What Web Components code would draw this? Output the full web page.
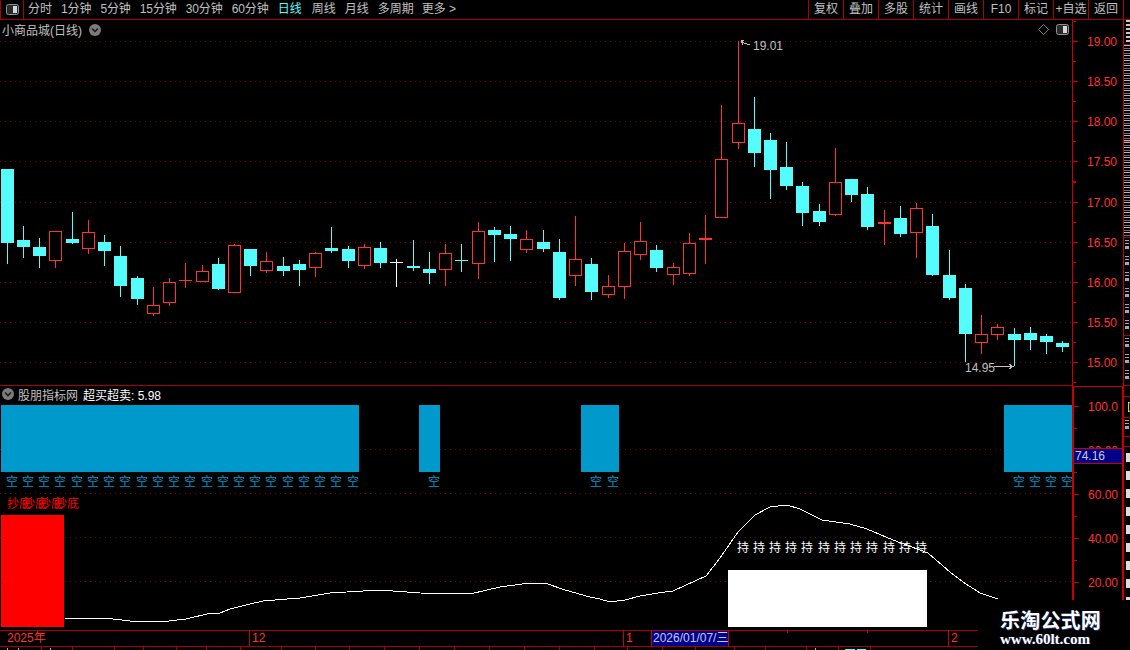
<!DOCTYPE html>
<html lang="zh">
<head>
<meta charset="utf-8">
<title>小商品城(日线)</title>
<style>
  html, body { margin: 0; background: #000; overflow: hidden; }
</style>
</head>
<body>
<terminal-shell>
  <tool-bar slot="toolbar">
    <tool-tab slot="tabs">分时</tool-tab>
    <tool-tab slot="tabs" tight>1分钟</tool-tab>
    <tool-tab slot="tabs" tight>5分钟</tool-tab>
    <tool-tab slot="tabs" tight>15分钟</tool-tab>
    <tool-tab slot="tabs" tight>30分钟</tool-tab>
    <tool-tab slot="tabs" tight>60分钟</tool-tab>
    <tool-tab slot="tabs" active>日线</tool-tab>
    <tool-tab slot="tabs" style="margin-left:1px">周线</tool-tab>
    <tool-tab slot="tabs">月线</tool-tab>
    <tool-tab slot="tabs">多周期</tool-tab>
    <tool-tab slot="tabs" style="margin-left:-1px">更多 &gt;</tool-tab>
    <tool-button slot="buttons">复权</tool-button>
    <tool-button slot="buttons">叠加</tool-button>
    <tool-button slot="buttons">多股</tool-button>
    <tool-button slot="buttons">统计</tool-button>
    <tool-button slot="buttons">画线</tool-button>
    <tool-button slot="buttons">F10</tool-button>
    <tool-button slot="buttons">标记</tool-button>
    <tool-button slot="buttons">+自选</tool-button>
    <tool-button slot="buttons">返回</tool-button>
  </tool-bar>

  <kline-panel slot="price">
    <span>小商品城(日线)</span>
    <chev-icon></chev-icon>
  </kline-panel>
  <value-axis slot="price-axis" top="20" height="365"
    ticks="41:19.00,81:18.50,121:18.00,161:17.50,202:17.00,242:16.50,282:16.00,322:15.50,362:15.00"></value-axis>

  <indicator-panel slot="indicator">
    <chev-icon></chev-icon>
    <span class="name">股朋指标网</span>
    <span class="value">超买超卖: 5.98</span>
  </indicator-panel>
  <value-axis slot="indicator-axis" heavy top="386" height="244" marker="74.16" marker-y="447"
    ticks="405:100.0,449:80.00,493:60.00,537:40.00,581:20.00"></value-axis>

  <date-bar slot="dates">
    <date-seg style="width:249px;padding-left:7px">2025年</date-seg>
    <date-seg style="width:374px" mark>12</date-seg>
    <date-seg style="width:28px" mark>1</date-seg>
    <date-seg style="width:78px" current>2026/01/07/三</date-seg>
    <date-seg style="width:219px" ruler></date-seg>
    <date-seg style="width:124px" mark>2</date-seg>
  </date-bar>
  <tab-strip slot="tabs" stops="42,73,115,144,177,207,241,282,316,350,385,420,455,490,525,560,595,628,663,696,735,766,807,839,871"></tab-strip>

  <side-strip slot="side"></side-strip>
  <water-mark slot="overlay"></water-mark>
</terminal-shell>

<script>
// candle data in page pixels: [x, high, bodyTop, bodyBottom, low, kind]
// kind: c = falling (solid cyan), r = rising (hollow red), w = flat white
const CANDLES = [
  [7,169,169,243,264,'c'],[23,226,240,247,258,'c'],[39,238,247,256,268,'c'],[55,231,231,261,268,'r'],
  [72,212,239,243,244,'c'],[88,220,232,249,254,'r'],[104,235,242,251,266,'c'],[120,246,256,286,297,'c'],
  [137,276,278,299,305,'c'],[153,287,305,314,316,'r'],[169,278,282,303,306,'r'],[185,263,280,280,288,'r'],
  [202,265,271,282,282,'r'],[218,258,264,289,290,'c'],[234,244,245,293,293,'r'],[250,249,249,266,276,'c'],
  [266,252,261,271,273,'r'],[283,257,266,271,276,'c'],[299,260,264,270,286,'c'],[315,252,253,268,277,'r'],
  [331,227,248,251,253,'c'],[348,246,249,261,268,'c'],[364,244,247,266,269,'r'],[380,242,248,263,268,'c'],
  [396,259,262,262,287,'w'],[413,240,266,268,271,'c'],[429,252,269,273,284,'c'],[445,244,253,270,286,'r'],
  [461,244,260,260,272,'c'],[478,222,231,264,279,'r'],[494,227,230,235,262,'c'],[510,226,234,239,261,'c'],
  [526,230,239,250,253,'r'],[543,230,242,249,252,'c'],[559,239,252,298,300,'c'],[575,216,259,276,286,'r'],
  [591,258,264,292,300,'c'],[608,275,286,295,298,'r'],[624,243,251,287,299,'r'],[640,222,241,255,260,'r'],
  [656,245,250,268,272,'c'],[673,263,267,275,285,'r'],[689,233,243,274,276,'r'],[705,215,238,240,264,'r'],
  [721,105,159,218,218,'r'],[738,41,123,143,149,'r'],[754,97,129,153,167,'c'],[770,133,140,170,199,'c'],
  [786,142,167,186,190,'c'],[802,182,186,213,226,'c'],[819,204,211,222,226,'c'],[835,148,182,215,216,'r'],
  [851,179,179,195,202,'c'],[867,187,194,227,230,'c'],[884,210,222,223,245,'r'],[900,206,218,234,237,'c'],
  [916,203,208,233,258,'r'],[932,214,226,275,276,'c'],[949,250,275,298,300,'c'],[965,284,288,334,362,'c'],
  [981,315,334,343,354,'r'],[997,324,327,335,340,'r'],[1014,328,334,340,366,'c'],[1030,327,333,340,350,'c'],
  [1046,334,336,342,354,'c'],[1062,341,343,347,352,'c']
];

const CURVE = '64,618 113,619 130,621 146,621 160,622 186,619 207,614 220,613 230,609 250,604 263,601 275,600 300,598 330,593 380,590 420,593 470,594 500,587 530,583 545,583 565,590 590,597 600,599 610,602 625,600 640,596 658,593 673,591 706,576 720,558 738,532 755,515 770,507 787,505 800,509 822,520 850,524 867,529 893,540 928,553 950,572 963,582 980,593 998,599';

const COLORS = { c: '#54fcfc', r: '#ff3232', w: '#ffffff' };
const RED_LINE = '#aa0000';
const AXIS_LINE = '#c80000';
const GRID_DOT = '#8c0000';

function dotted(y) {
  return `<line x1="0" x2="1072" y1="${y + 0.5}" y2="${y + 0.5}" stroke="${GRID_DOT}" stroke-dasharray="1 4"/>`;
}

function candleSvg([x, high, top, bottom, low, kind]) {
  const color = COLORS[kind];
  const wick = `<rect x="${x}" y="${high}" width="1" height="${low - high}" fill="${color}"/>`;
  // flat or one-step bodies are just a bar across the wick
  if (bottom - top < 2) return wick + `<rect x="${x - 6}" y="${top}" width="13" height="${bottom - top + 1}" fill="${color}"/>`;
  if (kind === 'c') return wick + `<rect x="${x - 6}" y="${top}" width="13" height="${bottom - top}" fill="${color}"/>`;
  return wick + `<rect x="${x - 5.5}" y="${top + 0.5}" width="12" height="${bottom - top - 1}" fill="#000" stroke="${color}"/>`;
}

class TerminalShell extends HTMLElement {
  constructor() {
    super();
    this.attachShadow({ mode: 'open' });
    this.shadowRoot.innerHTML = `
      <style>
        :host {
          display: grid;
          position: relative;
          width: 1130px;
          height: 650px;
          overflow: hidden;
          background: #000;
          color: #c0c0c0;
          font: 12px "Liberation Sans", "Noto Sans CJK SC", sans-serif;
          grid-template-columns: 1072px 52px 6px;
          grid-template-rows: 20px 366px 244px 17px 3px;
        }
        .full { grid-column: 1 / -1; }
        .side { grid-column: 3; grid-row: 2 / 6; }
        .low { grid-column: 1; }
      </style>
      <div class="full" style="display:grid"><slot name="toolbar"></slot></div>
      <div style="display:grid"><slot name="price"></slot></div>
      <div style="display:grid"><slot name="price-axis"></slot></div>
      <div class="side" style="display:grid"><slot name="side"></slot></div>
      <div style="display:grid"><slot name="indicator"></slot></div>
      <div style="display:grid"><slot name="indicator-axis"></slot></div>
      <div class="low" style="display:grid"><slot name="dates"></slot></div>
      <div class="low" style="display:grid;grid-row:5"><slot name="tabs"></slot></div>
      <slot name="overlay"></slot>
    `;
  }
}

class ToolBar extends HTMLElement {
  constructor() {
    super();
    this.attachShadow({ mode: 'open' });
    this.shadowRoot.innerHTML = `
      <style>
        :host {
          display: flex;
          height: 20px;
          box-sizing: border-box;
          border-bottom: 1px solid ${RED_LINE};
          padding-right: 6px;
        }
        .menu {
          width: 24px;
          box-sizing: border-box;
          border-left: 1px solid ${RED_LINE};
          border-right: 1px solid ${RED_LINE};
          display: flex;
          align-items: center;
          justify-content: center;
        }
        .tabs { display: flex; gap: 9px; padding-left: 4px; flex: 1; }
        .buttons { display: flex; border-right: 1px solid ${RED_LINE}; }
      </style>
      <div class="menu"><pane-icon></pane-icon></div>
      <div class="tabs"><slot name="tabs"></slot></div>
      <div class="buttons"><slot name="buttons"></slot></div>
    `;
  }
}

class ToolTab extends HTMLElement {
  constructor() {
    super();
    this.attachShadow({ mode: 'open' });
    this.shadowRoot.innerHTML = `
      <style>
        :host { display: block; line-height: 19px; white-space: nowrap; }
        :host([active]) { color: #54fcfc; }
        :host([tight]) { letter-spacing: -.1px; }
      </style>
      <slot></slot>
    `;
  }
}

class ToolButton extends HTMLElement {
  constructor() {
    super();
    this.attachShadow({ mode: 'open' });
    this.shadowRoot.innerHTML = `
      <style>
        :host {
          display: block;
          width: 35px;
          box-sizing: border-box;
          border-left: 1px solid ${RED_LINE};
          line-height: 19px;
          text-align: center;
          white-space: nowrap;
        }
      </style>
      <slot></slot>
    `;
  }
}

class PaneIcon extends HTMLElement {
  constructor() {
    super();
    this.attachShadow({ mode: 'open' });
    this.shadowRoot.innerHTML = `
      <style>:host { display: block; width: 13px; height: 11px; } svg { display: block; }</style>
      <svg width="13" height="11" viewBox="0 0 13 11">
        <rect x=".5" y=".5" width="12" height="10" rx="2" fill="#2a2a2a" stroke="#909090"/>
        <rect x="7" y="2" width="4" height="7" fill="#d8d8d8"/>
      </svg>
    `;
  }
}

class ChevIcon extends HTMLElement {
  constructor() {
    super();
    this.attachShadow({ mode: 'open' });
    this.shadowRoot.innerHTML = `
      <style>:host { display: block; width: 12px; height: 12px; } svg { display: block; }</style>
      <svg width="12" height="12" viewBox="0 0 12 12">
        <circle cx="6" cy="6" r="6" fill="#7c7c7c"/>
        <path d="M3 4.5 6 7.5 9 4.5" fill="none" stroke="#1c1c1c" stroke-width="1.6"/>
      </svg>
    `;
  }
}

class KlinePanel extends HTMLElement {
  constructor() {
    super();
    this.attachShadow({ mode: 'open' });
    const ys = [41, 81, 121, 161, 202, 242, 282, 322, 362];
    this.shadowRoot.innerHTML = `
      <style>
        :host {
          display: grid;
          height: 366px;
          box-sizing: border-box;
          border-bottom: 1px solid ${RED_LINE};
          overflow: hidden;
        }
        svg, .head { grid-area: 1 / 1; }
        svg { display: block; }
        .head {
          display: flex;
          align-items: center;
          align-self: start;
          height: 19px;
          padding: 0 3px 0 2px;
          gap: 7px;
          color: #c0c0c0;
        }
        .right { margin-left: auto; display: flex; align-items: center; gap: 7px; }
        text { fill: #c0c0c0; font-size: 12px; }
      </style>
      <svg width="1072" height="365" viewBox="0 20 1072 365" shape-rendering="crispEdges">
        ${ys.map(dotted).join('')}
        ${CANDLES.map(candleSvg).join('')}
        <path d="M741 41 744 43 750 45M741 41 744 40M741 41 743 45" fill="none" stroke="#c0c0c0"/>
        <text x="753" y="50">19.01</text>
        <text x="965" y="372">14.95</text>
        <path d="M994 366.5H1013M1009 364 1013 366.5 1009 369" fill="none" stroke="#c0c0c0"/>
      </svg>
      <div class="head">
        <slot></slot>
        <div class="right">
          <svg width="11" height="11" viewBox="0 0 11 11" shape-rendering="auto"><path d="M5.5 .5 10.5 5.5 5.5 10.5 .5 5.5Z" fill="none" stroke="#808080"/></svg>
          <pane-icon></pane-icon>
        </div>
      </div>
    `;
  }
}

class IndicatorPanel extends HTMLElement {
  constructor() {
    super();
    this.attachShadow({ mode: 'open' });
    const bars = [[1, 358], [419, 21], [581, 38], [1004, 68]]
      .map(([x, w]) => `<rect x="${x}" y="405" width="${w}" height="67" fill="#0099cc"/>`).join('');
    // signal labels sit 5px to the right of the candle they belong to
    const kong = CANDLES.filter((c, i) => i < 22 || [26, 36, 37, 62, 63, 64, 65].includes(i))
      .map(c => `<text class="kong" x="${c[0] + 5}" y="486">空</text>`).join('');
    const chi = CANDLES.slice(45, 57)
      .map(c => `<text class="chi" x="${c[0] + 5}" y="552">持</text>`).join('');
    const bottom = [7, 23, 39, 55]
      .map(x => `<text class="bottom" x="${x}" y="508">抄底</text>`).join('');
    this.shadowRoot.innerHTML = `
      <style>
        :host { display: grid; height: 244px; overflow: hidden; }
        svg, .head { grid-area: 1 / 1; }
        svg { display: block; }
        .head {
          display: flex;
          align-items: center;
          align-self: start;
          height: 16px;
          padding-left: 2px;
          gap: 4px;
        }
        text { font-size: 12px; text-anchor: middle; }
        .kong { fill: #0099cc; }
        .chi { fill: #fff; }
        .bottom { fill: #ff0000; text-anchor: start; }
        ::slotted(.name) { margin-right: 1px; }
        ::slotted(.value) { color: #fff; }
      </style>
      <svg width="1072" height="244" viewBox="0 386 1072 244" shape-rendering="crispEdges">
        ${[449, 493, 537, 581].map(dotted).join('')}
        ${bars}
        ${kong}
        ${bottom}
        <rect x="1" y="515" width="63" height="112" fill="#ff0000"/>
        <polyline points="${CURVE}" fill="none" stroke="#fff"/>
        ${chi}
        <rect x="728" y="570" width="199" height="57" fill="#fff"/>
      </svg>
      <div class="head"><slot></slot></div>
    `;
  }
}

class ValueAxis extends HTMLElement {
  connectedCallback() {
    const top = Number(this.getAttribute('top'));
    const height = Number(this.getAttribute('height'));
    const ticks = this.getAttribute('ticks').split(',').map(t => t.split(':'));
    const step = (Number(ticks[ticks.length - 1][0]) - Number(ticks[0][0])) / (ticks.length - 1);
    const marks = ticks.map(([y, label]) => `
      <rect x="1" y="${y}" width="5" height="1" fill="${AXIS_LINE}"/>
      <rect x="1" y="${Math.round(Number(y) + step / 2)}" width="3" height="1" fill="${AXIS_LINE}"/>
      <rect x="1" y="${Math.round(Number(y) - step / 2)}" width="3" height="1" fill="${AXIS_LINE}"/>
      <text x="45" y="${Number(y) + 5}">${label}</text>
    `).join('');
    let marker = '';
    if (this.hasAttribute('marker')) {
      const my = Number(this.getAttribute('marker-y'));
      marker = `
        <rect x="1" y="${my}" width="50" height="16" fill="#000088"/>
        <rect x="1" y="${my}" width="50" height="1" fill="${AXIS_LINE}"/>
        <rect x="1" y="${my + 15}" width="50" height="1" fill="${AXIS_LINE}"/>
        <text class="mark" x="2" y="${my + 12}">${this.getAttribute('marker')}</text>`;
    }
    this.attachShadow({ mode: 'open' });
    this.shadowRoot.innerHTML = `
      <style>
        :host {
          display: block;
          box-sizing: border-box;
          border-left: 1px solid ${AXIS_LINE};
          border-right: 1px solid ${AXIS_LINE};
          margin-left: 0;
          overflow: hidden;
        }
        :host([heavy]) {
          border-width: 2px;
          border-top: 1px solid ${AXIS_LINE};
        }
        svg { display: block; margin-left: -1px; }
        text { fill: #ff3232; font-size: 12px; text-anchor: end; }
        .mark { fill: #c8c8e0; text-anchor: start; }
      </style>
      <svg width="52" height="${height}" viewBox="0 ${top} 52 ${height}" shape-rendering="crispEdges">
        ${marks}
        ${marker}
      </svg>
    `;
  }
}

class DateBar extends HTMLElement {
  constructor() {
    super();
    this.attachShadow({ mode: 'open' });
    this.shadowRoot.innerHTML = `
      <style>
        :host {
          display: flex;
          box-sizing: border-box;
          height: 17px;
          border-top: 1px solid ${RED_LINE};
          border-bottom: 1px solid ${RED_LINE};
          color: #ff3232;
        }
      </style>
      <slot></slot>
    `;
  }
}

class DateSeg extends HTMLElement {
  constructor() {
    super();
    this.attachShadow({ mode: 'open' });
    this.shadowRoot.innerHTML = `
      <style>
        :host {
          display: block;
          box-sizing: border-box;
          line-height: 15px;
          white-space: nowrap;
          overflow: hidden;
        }
        :host([mark]) { border-left: 1px solid ${AXIS_LINE}; padding-left: 2px; }
        :host([current]) {
          background: #000088;
          color: #c8c8f0;
          border-left: 1px solid ${AXIS_LINE};
          border-right: 1px solid ${AXIS_LINE};
          padding-left: 1px;
        }
        :host([ruler]) {
          background:
            linear-gradient(${AXIS_LINE}, ${AXIS_LINE}) 58px 0 / 1px 2px no-repeat,
            linear-gradient(${AXIS_LINE}, ${AXIS_LINE}) 138px 0 / 1px 2px no-repeat;
        }
      </style>
      <slot></slot>
    `;
  }
}

class TabStrip extends HTMLElement {
  connectedCallback() {
    const stops = this.getAttribute('stops').split(',').map(Number);
    // only the tops of the tab captions show above the window edge
    const kinds = { 0: 'first', 1: 'second', [stops.length - 2]: 'second', [stops.length - 1]: 'on' };
    const cells = stops.map((stop, i) => {
      const w = stop - (i ? stops[i - 1] : 0);
      return `<div class="cell ${kinds[i] || ''}" style="width:${w}px"></div>`;
    }).join('');
    this.attachShadow({ mode: 'open' });
    this.shadowRoot.innerHTML = `
      <style>
        :host { display: flex; height: 3px; overflow: hidden; }
        .cell { box-sizing: border-box; border-right: 1px solid ${RED_LINE}; background-repeat: no-repeat; }
        .first { background-image: repeating-linear-gradient(90deg, transparent 0 7px, #b0b0b0 7px 8px, transparent 8px 11px); background-position: 0 100%; background-size: 24px 2px; }
        .second { background-image: linear-gradient(#b0b0b0, #b0b0b0); background-position: 8px 100%; background-size: 1px 2px; }
        .on { background-image: linear-gradient(90deg, transparent 0 6px, #54fcfc 6px 16px, transparent 16px 18px, #54fcfc 18px 27px, transparent 27px); background-position: 0 100%; background-size: 100% 1px; }
      </style>
      ${cells}
    `;
  }
}

class SideStrip extends HTMLElement {
  constructor() {
    super();
    this.attachShadow({ mode: 'open' });
    // the strip is the left edge of a panel cut off by the window: only glyph stubs show
    const rows = [
      [25, 'blocks'], [97, 'dense'], [96, 'dense'], [98, 'sparse'], [50, 'sparse'],
      [11, ''], [21, 'yellow'], [19, 'sparse'], [10, ''], [0, 'ones']
    ];
    this.shadowRoot.innerHTML = `
      <style>
        :host { display: flex; flex-direction: column; height: 630px; overflow: hidden; }
        div { box-sizing: border-box; border-bottom: 1px solid ${RED_LINE}; flex: none; }
        .dense { background: repeating-linear-gradient(#b8b8b8 0 1px, #000 1px 3px, #707070 3px 4px, #000 4px 5px) right / 100% 100% no-repeat; }
        .sparse { background: repeating-linear-gradient(#000 0 2px, #a8a8a8 2px 3px, #000 3px 5px, #a8a8a8 5px 6px, #000 6px 8px, #a8a8a8 8px 11px, #000 11px 16px) 1px 0 / 4px 100% no-repeat; }
        .blocks { background: repeating-linear-gradient(#c8c8c8 0 2px, #000 2px 4px) 2px 0 / 4px 100% no-repeat; }
        .yellow { background: linear-gradient(#e0e000, #e0e000) 4px 5px / 2px 1px no-repeat, linear-gradient(#e0e000, #e0e000) 4px 14px / 2px 1px no-repeat, linear-gradient(#e0e000, #e0e000) 4px 5px / 1px 10px no-repeat; }
        .ones { flex: 1; border: 0; background: repeating-linear-gradient(#000 0 6px, #dcdcdc 6px 15px, #000 15px 18px) right / 4px 100% no-repeat; }
      </style>
      ${rows.map(([h, kind]) => `<div class="${kind}" ${h ? `style="height:${h}px"` : ''}></div>`).join('')}
    `;
  }
}

class WaterMark extends HTMLElement {
  constructor() {
    super();
    this.attachShadow({ mode: 'open' });
    this.shadowRoot.innerHTML = `
      <style>
        :host {
          position: absolute;
          right: 0;
          bottom: 0;
          width: 152px;
          height: 50px;
          box-sizing: border-box;
          background: #000;
          padding: 10px 0 0 22px;
          color: #fff;
          font-weight: bold;
          white-space: nowrap;
        }
        .name {
          font: bold 20px/20px "Noto Sans CJK SC", sans-serif;
          letter-spacing: .2px;
          text-shadow: 1px 1px 0 #1c2c70;
        }
        .url {
          font: bold 15px/15px "Liberation Serif", serif;
          margin-top: 2px;
          text-shadow: 1px 0 0 #1c2c70;
        }
      </style>
      <div class="name">乐淘公式网</div>
      <div class="url">www.60lt.com</div>
    `;
  }
}

customElements.define('terminal-shell', TerminalShell);
customElements.define('tool-bar', ToolBar);
customElements.define('tool-tab', ToolTab);
customElements.define('tool-button', ToolButton);
customElements.define('pane-icon', PaneIcon);
customElements.define('chev-icon', ChevIcon);
customElements.define('kline-panel', KlinePanel);
customElements.define('indicator-panel', IndicatorPanel);
customElements.define('value-axis', ValueAxis);
customElements.define('date-bar', DateBar);
customElements.define('date-seg', DateSeg);
customElements.define('tab-strip', TabStrip);
customElements.define('side-strip', SideStrip);
customElements.define('water-mark', WaterMark);
</script>
</body>
</html>
